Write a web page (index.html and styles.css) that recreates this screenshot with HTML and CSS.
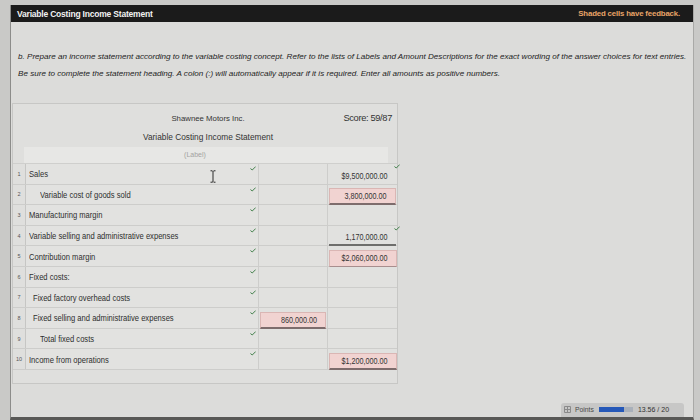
FILE: index.html
```html
<!DOCTYPE html>
<html>
<head>
<meta charset="utf-8">
<title>Variable Costing Income Statement</title>
<link rel="stylesheet" href="styles.css">
</head>
<body>
<div class="frame">
  <div class="titlebar">
    <span class="title">Variable Costing Income Statement</span>
    <span class="feedback">Shaded cells have feedback.</span>
  </div>
  <div class="instructions">
    <p>b. Prepare an income statement according to the variable costing concept. Refer to the lists of Labels and Amount Descriptions for the exact wording of the answer choices for text entries.</p>
    <p>Be sure to complete the statement heading. A colon (:) will automatically appear if it is required. Enter all amounts as positive numbers.</p>
  </div>
  <div class="stmt">
    <div class="head">
      <span></span>
      <span class="company">Shawnee Motors Inc.</span>
      <span class="score">Score: 59/87</span>
    </div>
    <div class="head2">Variable Costing Income Statement</div>
    <div class="labelbar">(Label)</div>
    <div class="rows">
      <div class="row">
        <div class="num">1</div>
        <div class="lbl i0"><span class="t">Sales</span><svg class="chk" viewBox="0 0 8 6"><path d="M1 3.4 L3 5 L7.2 0.8"/></svg><svg class="ibeam" viewBox="0 0 6 13"><path d="M0.5 0.8 H2.3 L3 1.5 L3.7 0.8 H5.5 M3 1.5 V11.5 M0.5 12.2 H2.3 L3 11.5 L3.7 12.2 H5.5"/></svg></div>
        <div class="amt"></div>
        <div class="amt"><div class="val"><span class="n">$9,500,000.00</span></div><svg class="chk chk-amt" viewBox="0 0 8 6"><path d="M1 3.4 L3 5 L7.2 0.8"/></svg></div>
      </div>
      <div class="row">
        <div class="num">2</div>
        <div class="lbl i2"><span class="t">Variable cost of goods sold</span><svg class="chk" viewBox="0 0 8 6"><path d="M1 3.4 L3 5 L7.2 0.8"/></svg></div>
        <div class="amt"></div>
        <div class="amt"><div class="val pink under"><span class="n">3,800,000.00</span></div></div>
      </div>
      <div class="row">
        <div class="num">3</div>
        <div class="lbl i0"><span class="t">Manufacturing margin</span><svg class="chk" viewBox="0 0 8 6"><path d="M1 3.4 L3 5 L7.2 0.8"/></svg></div>
        <div class="amt"></div>
        <div class="amt"></div>
      </div>
      <div class="row">
        <div class="num">4</div>
        <div class="lbl i0"><span class="t">Variable selling and administrative expenses</span><svg class="chk" viewBox="0 0 8 6"><path d="M1 3.4 L3 5 L7.2 0.8"/></svg></div>
        <div class="amt"></div>
        <div class="amt"><div class="val under-dark"><span class="n">1,170,000.00</span></div><svg class="chk chk-amt" viewBox="0 0 8 6"><path d="M1 3.4 L3 5 L7.2 0.8"/></svg></div>
      </div>
      <div class="row">
        <div class="num">5</div>
        <div class="lbl i0"><span class="t">Contribution margin</span><svg class="chk" viewBox="0 0 8 6"><path d="M1 3.4 L3 5 L7.2 0.8"/></svg></div>
        <div class="amt"></div>
        <div class="amt"><div class="val pink"><span class="n">$2,060,000.00</span></div></div>
      </div>
      <div class="row">
        <div class="num">6</div>
        <div class="lbl i0"><span class="t">Fixed costs:</span><svg class="chk" viewBox="0 0 8 6"><path d="M1 3.4 L3 5 L7.2 0.8"/></svg></div>
        <div class="amt"></div>
        <div class="amt"></div>
      </div>
      <div class="row">
        <div class="num">7</div>
        <div class="lbl i1"><span class="t">Fixed factory overhead costs</span><svg class="chk" viewBox="0 0 8 6"><path d="M1 3.4 L3 5 L7.2 0.8"/></svg></div>
        <div class="amt"></div>
        <div class="amt"></div>
      </div>
      <div class="row">
        <div class="num">8</div>
        <div class="lbl i1"><span class="t">Fixed selling and administrative expenses</span><svg class="chk" viewBox="0 0 8 6"><path d="M1 3.4 L3 5 L7.2 0.8"/></svg></div>
        <div class="amt"><div class="val pink under"><span class="n">860,000.00</span></div></div>
        <div class="amt"></div>
      </div>
      <div class="row">
        <div class="num">9</div>
        <div class="lbl i2"><span class="t">Total fixed costs</span><svg class="chk" viewBox="0 0 8 6"><path d="M1 3.4 L3 5 L7.2 0.8"/></svg></div>
        <div class="amt"></div>
        <div class="amt"></div>
      </div>
      <div class="row">
        <div class="num">10</div>
        <div class="lbl i0"><span class="t">Income from operations</span><svg class="chk" viewBox="0 0 8 6"><path d="M1 3.4 L3 5 L7.2 0.8"/></svg></div>
        <div class="amt"></div>
        <div class="amt"><div class="val pink under"><span class="n">$1,200,000.00</span></div></div>
      </div>
    </div>
  </div>
  <div class="footer">
    <div class="points">
      <svg class="pico" viewBox="0 0 7 7"><path d="M0.5 0.5 H6.5 V6.5 H0.5 Z M0.5 3.5 H6.5 M3.5 0.5 V6.5"/></svg>
      <span class="plabel">Points</span>
      <span class="pbar"><span class="pfill"></span></span>
      <span class="pval">13.56 / 20</span>
    </div>
  </div>
</div>
</body>
</html>
```

FILE: styles.css
```css
html, body {
  margin: 0;
  padding: 0;
}
body {
  width: 700px;
  height: 420px;
  overflow: hidden;
  background: #c9c9c7;
  font-family: "Liberation Sans", Arial, sans-serif;
}
.frame {
  box-sizing: border-box;
  margin: 5px 0 0 10px;
  width: 684px;
  height: 415px;
  background: #dcdcda;
  border-left: 1px solid #8c8c8a;
  border-right: 1px solid #a9a9a7;
  border-bottom: 3px solid #585856;
}
.titlebar {
  height: 17px;
  background: #1b1b1b;
  display: flex;
  align-items: center;
  justify-content: space-between;
  padding: 0 13px 0 6px;
}
.title {
  color: #f2f2f2;
  font-weight: bold;
  font-size: 8.5px;
  letter-spacing: -0.2px;
}
.feedback {
  color: #e9a468;
  font-weight: bold;
  font-size: 7.8px;
  letter-spacing: -0.15px;
}
.instructions {
  margin-top: 26px;
  padding-left: 7px;
  color: #232323;
  font-style: italic;
  font-size: 8.1px;
}
.instructions p {
  margin: 0;
  line-height: 17px;
}
.stmt {
  box-sizing: border-box;
  margin: 21px 0 0 1px;
  width: 386px;
  border: 1px solid #c7c7c5;
  padding: 8px 0 13px 0;
  background: #dfdfdd;
}
.head {
  display: grid;
  grid-template-columns: 1fr auto 1fr;
  align-items: center;
  height: 12px;
  padding-left: 6px;
}
.company {
  font-size: 7.8px;
  color: #333;
}
.score {
  justify-self: end;
  padding-right: 5px;
  font-size: 9.3px;
  color: #333;
  letter-spacing: -0.35px;
}
.head2 {
  margin-top: 7px;
  height: 12px;
  line-height: 12px;
  text-align: center;
  padding-left: 6px;
  font-size: 8.3px;
  color: #333;
}
.labelbar {
  margin: 4px 0 0 11px;
  width: 364px;
  height: 16px;
  line-height: 16px;
  background: #e7e7e5;
  text-align: center;
  padding-right: 22px;
  box-sizing: border-box;
  font-size: 7px;
  color: #a3a3a1;
}
.rows {
  margin-top: 0;
  border-top: 1px solid #cfcfcd;
}
.row {
  display: grid;
  grid-template-columns: 13px 233px 69px 69px;
  height: 20.6px;
  box-sizing: border-box;
  border-bottom: 1px solid #cdcdcb;
}
.num {
  font-size: 5.5px;
  color: #555;
  display: flex;
  align-items: center;
  justify-content: center;
  border-right: 1px solid #c6c6c4;
}
.lbl {
  position: relative;
  display: flex;
  align-items: center;
  color: #2e2e2e;
  background: #e2e2e0;
  border-right: 1px solid #cdcdcb;
}
.t {
  display: inline-block;
  white-space: nowrap;
  font-size: 9.5px;
  transform: scaleX(0.8);
  transform-origin: left center;
}
.i0 { padding-left: 3px; }
.i1 { padding-left: 7px; }
.i2 { padding-left: 14px; }
.amt {
  position: relative;
  display: flex;
  align-items: flex-end;
  border-right: 1px solid #cdcdcb;
  background: #e1e1df;
}
.amt:last-child {
  border-right: none;
}
.val {
  box-sizing: border-box;
  width: 100%;
  height: 17px;
  margin: 0 1px -1px 1px;
  display: flex;
  align-items: center;
  justify-content: flex-end;
  padding-right: 8px;
  color: #333;
}
.n {
  display: inline-block;
  white-space: nowrap;
  font-size: 9px;
  transform: scaleX(0.8);
  transform-origin: right center;
}
.val.pink {
  background: #f1d3d1;
  border: 1px solid #dab6b4;
  border-bottom: 1px solid #a88e8e;
}
.val.under {
  border-bottom: 2px solid #7d6c6c;
}
.val.under-dark {
  border-bottom: 2px solid #6e6e6c;
}
.chk {
  position: absolute;
  right: 2px;
  top: 2px;
  width: 6px;
  height: 5px;
}
.chk path {
  fill: none;
  stroke: #3f7d48;
  stroke-width: 1.3;
  stroke-linecap: round;
  stroke-linejoin: round;
}
.chk-amt {
  right: -3px;
  top: 0;
}
.ibeam {
  position: absolute;
  left: 184px;
  top: 6px;
  width: 6px;
  height: 13px;
}
.ibeam path {
  fill: none;
  stroke: #2a2a2a;
  stroke-width: 1;
}
.footer {
  display: flex;
  justify-content: flex-end;
  padding-right: 9px;
  margin-top: 19px;
}
.points {
  display: flex;
  align-items: center;
  height: 14px;
  width: 123px;
  box-sizing: border-box;
  padding: 0 5px 0 3px;
  background: #c7c7c6;
  border-radius: 3px 3px 0 0;
}
.pico {
  width: 7px;
  height: 7px;
}
.pico path {
  fill: none;
  stroke: #8a8a8a;
  stroke-width: 1;
}
.plabel {
  margin-left: 4px;
  font-size: 6.8px;
  color: #4a4a4a;
}
.pbar {
  margin-left: 5px;
  width: 34px;
  height: 5px;
  background: #a9b0ba;
  display: flex;
}
.pfill {
  width: 25px;
  height: 100%;
  background: #2558b8;
}
.pval {
  margin-left: 5px;
  font-size: 7px;
  color: #333;
}
```
